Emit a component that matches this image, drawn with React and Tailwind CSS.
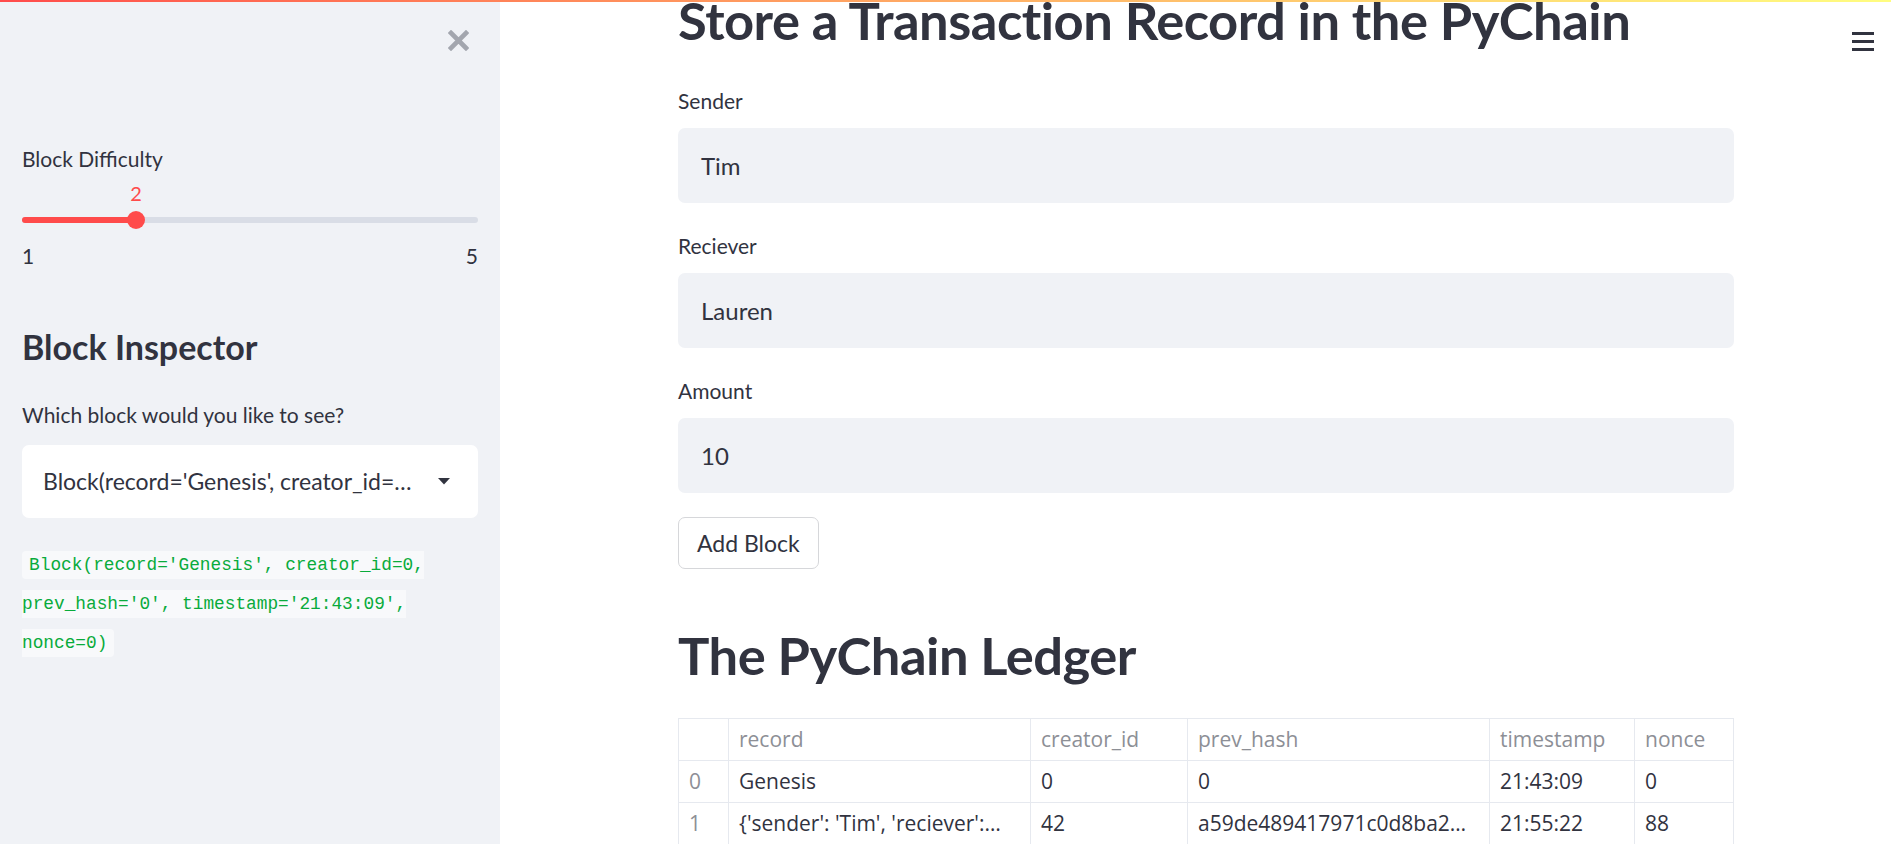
const ledger = [
  { idx: 0, record: 'Genesis', creator: '0', prev: '0', ts: '21:43:09', nonce: '0' },
  { idx: 1, record: "{'sender': 'Tim', 'reciever':…", creator: '42', prev: 'a59de489417971c0d8ba2…', ts: '21:55:22', nonce: '88' },
];

const fields = [
  { label: 'Sender', value: 'Tim' },
  { label: 'Reciever', value: 'Lauren' },
  { label: 'Amount', value: '10' },
];

const Slider = ({ value, min, max }) => {
  const pct = ((value - min) / (max - min)) * 100;
  return (
    <div className="mt-[6px]">
      <div className="relative h-[25px]">
        <span className="absolute top-0 -translate-x-1/2 text-[20px] leading-[25px] text-[#ff4b4b]" style={{ left: `${pct}%` }}>
          {value}
        </span>
      </div>
      <div className="relative h-[6px] rounded-full bg-[#d9dde6] mt-[11px]">
        <div className="h-full rounded-full bg-[#ff4b4b]" style={{ width: `${pct}%` }} />
        <div className="absolute top-1/2 h-[18px] w-[18px] -translate-x-1/2 -translate-y-1/2 rounded-full bg-[#ff4b4b]" style={{ left: `${pct}%` }} />
      </div>
      <div className="flex justify-between text-[21px] leading-[30px] mt-[18px]">
        <span>{min}</span>
        <span>{max}</span>
      </div>
    </div>
  );
};

const App = () => {
  return (
    <div className="relative flex h-[844px] overflow-hidden bg-white font-['Lato',sans-serif] text-[#31333f]">
      {/* decoration bar */}
      <div className="absolute top-0 left-0 right-0 h-[2px] bg-linear-to-r from-[#ff4b4b] to-[#fffd80]" />

      {/* Sidebar */}
      <aside className="w-[500px] shrink-0 bg-[#f0f2f6] px-[22px]">
        <div className="flex justify-end pt-[30px] pr-[9px]">
          <svg width="21" height="21" viewBox="0 0 21 21">
            <path d="M3 3 L18 18 M18 3 L3 18" stroke="#a3a6ae" strokeWidth="4.6" strokeLinecap="square" />
          </svg>
        </div>

        <div className="mt-[92px] text-[21px] leading-[32px]">Block Difficulty</div>
        <Slider value={2} min={1} max={5} />

        <h2 className="mt-[52px] text-[34px] font-bold leading-[48px]">Block Inspector</h2>
        <p className="mt-[28px] text-[21px] leading-[32px]">Which block would you like to see?</p>

        <div className="mt-[14px] flex h-[73px] items-center rounded-[7px] bg-white pl-[21px] pr-[28px]">
          <span className="min-w-0 flex-1 truncate text-[23px]">Block(record='Genesis', creator_id=…</span>
          <svg width="12" height="7" viewBox="0 0 12 7" className="ml-[14px] shrink-0">
            <path d="M0 0 L12 0 L6 6.5 Z" fill="#31333f" />
          </svg>
        </div>

        <p className="mt-[28px] font-['Liberation_Mono',monospace] text-[17.8px] leading-[39px] text-[#09ab3b]">
          <code className="box-decoration-slice rounded-[4px] bg-[#f8f9fb] px-[0.4em] py-[0.25em]">
            Block(record='Genesis', creator_id=0, prev_hash='0', timestamp='21:43:09', nonce=0)
          </code>
        </p>
      </aside>

      {/* Main */}
      <main className="flex-1 pl-[178px] pr-[158px]">
        <h1 className="-mt-[10px] text-[52.5px] font-bold leading-[60px] tracking-[-0.5px]">Store a Transaction Record in the PyChain</h1>

        <div className="mt-[35px]">
          {fields.map((f, i) => (
            <div key={f.label} className={i === 0 ? '' : 'mt-[27px]'}>
              <div className="text-[21px] leading-[32px]">{f.label}</div>
              <div className="mt-[11px] flex h-[75px] items-center rounded-[7px] bg-[#f0f2f6] px-[23px] text-[24px]">
                {f.value}
              </div>
            </div>
          ))}
        </div>

        <button className="mt-[24px] h-[52px] rounded-[7px] border border-[#d6d7da] bg-white px-[18px] text-[23px] text-[#31333f]">
          Add Block
        </button>

        <h1 className="mt-[56px] text-[52.5px] font-bold leading-[60px] tracking-[-0.5px]">The PyChain Ledger</h1>

        <table className="mt-[33px] w-full table-fixed border-collapse font-['Open_Sans',sans-serif] text-[21px]">
          <colgroup>
            <col className="w-[50px]" />
            <col className="w-[302px]" />
            <col className="w-[157px]" />
            <col className="w-[302px]" />
            <col className="w-[145px]" />
            <col className="w-[99px]" />
          </colgroup>
          <thead>
            <tr className="h-[42px] text-[#8d8f96]">
              <th className="border border-[#e6e9ef] px-[10px] text-left font-normal"></th>
              <th className="border border-[#e6e9ef] px-[10px] text-left font-normal">record</th>
              <th className="border border-[#e6e9ef] px-[10px] text-left font-normal">creator_id</th>
              <th className="border border-[#e6e9ef] px-[10px] text-left font-normal">prev_hash</th>
              <th className="border border-[#e6e9ef] px-[10px] text-left font-normal">timestamp</th>
              <th className="border border-[#e6e9ef] px-[10px] text-left font-normal">nonce</th>
            </tr>
          </thead>
          <tbody>
            {ledger.map((r) => (
              <tr key={r.idx} className="h-[42px]">
                <td className="border border-[#e6e9ef] px-[10px] text-[#8d8f96]">{r.idx}</td>
                <td className="truncate border border-[#e6e9ef] px-[10px]">{r.record}</td>
                <td className="border border-[#e6e9ef] px-[10px]">{r.creator}</td>
                <td className="truncate border border-[#e6e9ef] px-[10px]">{r.prev}</td>
                <td className="border border-[#e6e9ef] px-[10px]">{r.ts}</td>
                <td className="border border-[#e6e9ef] px-[10px]">{r.nonce}</td>
              </tr>
            ))}
          </tbody>
        </table>
      </main>

      {/* Menu button */}
      <div className="absolute top-[32px] right-[17px] flex w-[22px] flex-col gap-[5px]">
        <span className="h-[3px] bg-[#31333f]" />
        <span className="h-[3px] bg-[#31333f]" />
        <span className="h-[3px] bg-[#31333f]" />
      </div>
    </div>
  );
};

export default App;
